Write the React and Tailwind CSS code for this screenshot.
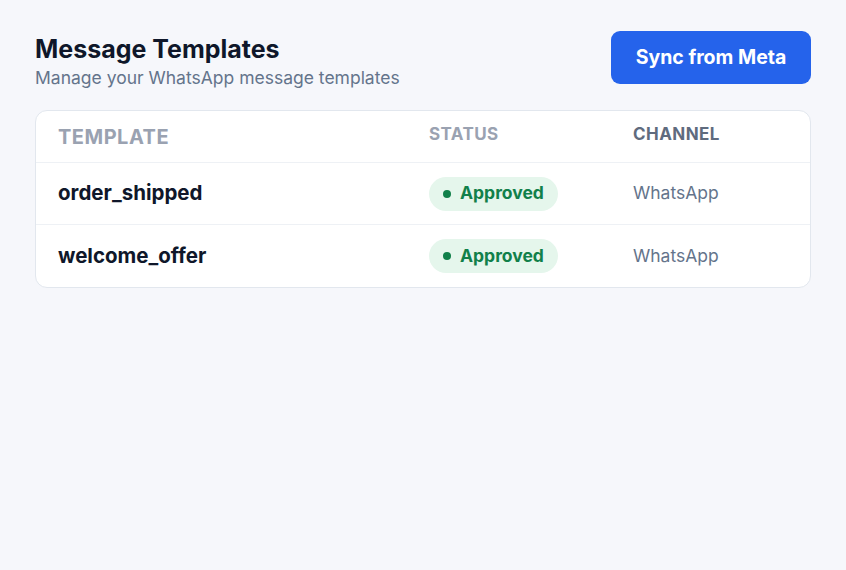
export default function App() {
  const rows = ['order_shipped', 'welcome_offer'];
  return (
    <div className="min-h-screen bg-[#f6f7fb] px-[35px] pt-[31px]" style={{ fontFamily: 'Inter, "Noto Sans", sans-serif' }}>
      <div className="flex items-start justify-between">
        <div className="mt-[2px]">
          <h1 className="text-[25px] font-bold leading-[32px] text-[#0f172a]">Message Templates</h1>
          <p className="text-[17.5px] leading-[26px] text-[#64748b]">Manage your WhatsApp message templates</p>
        </div>
        <button className="h-[53px] w-[200px] rounded-[9px] bg-[#2563eb] text-[19.5px] font-bold text-white">Sync from Meta</button>
      </div>
      <div className="mt-[19px] overflow-hidden rounded-[12px] border-[1.5px] border-[#e2e7ee] bg-white">
        <div className="flex h-[52px] items-center border-b border-[#eef1f5]">
          <div className="w-[393px] pl-[22px] text-[20px] font-bold tracking-wide text-[#9aa2b1]">TEMPLATE</div>
          <div className="w-[204px] text-[17px] font-bold tracking-wide text-[#9aa2b1] pb-[4px]">STATUS</div>
          <div className="text-[17px] font-bold tracking-wide text-[#5f6b7e] pb-[4px]">CHANNEL</div>
        </div>
        {rows.map((r, i) => (
          <div key={r} className={`flex h-[62px] items-center ${i === 0 ? 'border-b border-[#eef1f5]' : ''}`}>
            <div className="w-[393px] pl-[22px] text-[20.5px] font-bold text-[#0f172a]">{r}</div>
            <div className="w-[204px]">
              <span className="inline-flex h-[34px] items-center gap-[9px] rounded-full bg-[#e5f6ec] pl-[14px] pr-[14px] text-[17.5px] font-bold text-[#11804a]">
                <span className="h-[8px] w-[8px] rounded-full bg-[#11804a]" />
                Approved
              </span>
            </div>
            <div className="text-[17.5px] text-[#64748b]">WhatsApp</div>
          </div>
        ))}
      </div>
    </div>
  );
}
